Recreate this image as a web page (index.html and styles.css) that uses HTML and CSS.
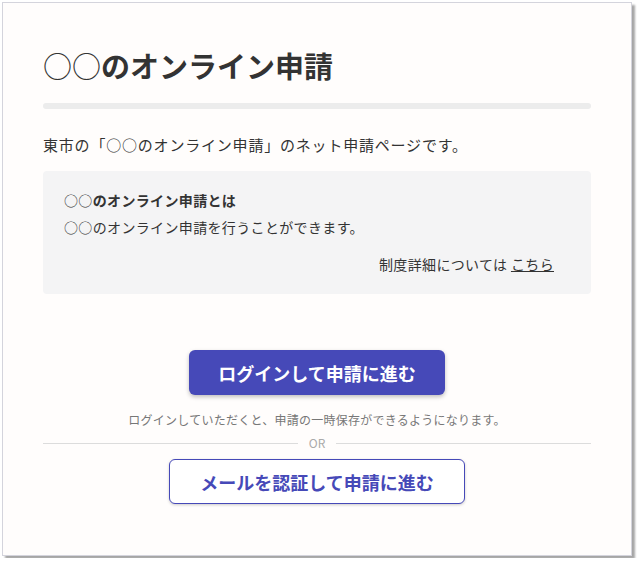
FILE: index.html
```html
<!DOCTYPE html>
<html lang="ja">
<head>
  <meta charset="UTF-8" />
  <meta name="viewport" content="width=device-width, initial-scale=1" />
  <title>○○のオンライン申請</title>
  <link rel="stylesheet" href="styles.css">
</head>
<body>
  <div class="page">
    <h1 class="title"><span class="maru">○○</span>のオンライン申請</h1>
    <div class="title-bar"></div>

    <p class="lead">東市の「○○のオンライン申請」のネット申請ページです。</p>

    <div class="info">
      <p class="info-head"><span class="maru">○○</span>のオンライン申請とは</p>
      <p class="info-text">○○のオンライン申請を行うことができます。</p>
      <p class="info-link">制度詳細については <a href="#">こちら</a></p>
    </div>

    <div class="actions">
      <button class="btn btn-login">ログインして申請に進む</button>
      <p class="note">ログインしていただくと、申請の一時保存ができるようになります。</p>
      <div class="or"><span>OR</span></div>
      <button class="btn btn-mail">メールを認証して申請に進む</button>
    </div>
  </div>
</body>
</html>
```

FILE: styles.css
```css
body {
  margin: 0;
  background: #ffffff;
  font-family: "Noto Sans CJK JP", "Noto Sans", sans-serif;
  color: #333;
}
.page {
  box-sizing: border-box;
  width: 630px;
  height: 554px;
  margin: 2px;
  padding: 0 40px;
  background: #fffdfc;
  border: 1px solid #d4d4dc;
  box-shadow: 3px 3px 2px rgba(0,0,0,0.35);
}
.maru {
  font-weight: 400;
}
.title {
  margin: 0;
  padding-top: 42px;
  font-size: 29px;
  line-height: 40px;
  font-weight: 700;
  color: #333;
}
.title-bar {
  margin-top: 18px;
  height: 6px;
  border-radius: 3px;
  background: #ececec;
}
.lead {
  margin: 24px 0 0;
  font-size: 15px;
  line-height: 24px;
  letter-spacing: 0.8px;
}
.info {
  margin-top: 14px;
  padding: 16px 37px 16px 21px;
  background: #f4f4f5;
  border-radius: 4px;
}
.info p {
  margin: 0;
  font-size: 14px;
  line-height: 27px;
  letter-spacing: 0.35px;
}
.info-head {
  font-weight: 700;
}
.info-link {
  margin-top: 10px !important;
  text-align: right;
}
.info-link a {
  color: #333;
}
.actions {
  display: flex;
  flex-direction: column;
  align-items: center;
  margin-top: 56px;
}
.btn {
  font-family: inherit;
  font-size: 18px;
  font-weight: 700;
  height: 45px;
  border-radius: 6px;
  cursor: pointer;
}
.btn-login {
  width: 256px;
  border: none;
  background: #4649b8;
  color: #fff;
  box-shadow: 0 2px 4px rgba(0,0,0,0.25);
}
.btn-mail {
  width: 296px;
  margin-top: 8px;
  border: 1px solid #4649b8;
  background: #fff;
  color: #4649b8;
  box-shadow: 0 1px 3px rgba(0,0,0,0.2);
}
.note {
  margin: 16px 0 0;
  font-size: 12px;
  line-height: 18px;
  letter-spacing: 0.25px;
  color: #777;
}
.or {
  align-self: stretch;
  display: flex;
  align-items: center;
  gap: 11px;
  margin-top: 6px;
  font-size: 12px;
  line-height: 16px;
  color: #aaa;
}
.or::before,
.or::after {
  content: "";
  flex: 1;
  height: 1px;
  background: #dcdcdc;
}
```
